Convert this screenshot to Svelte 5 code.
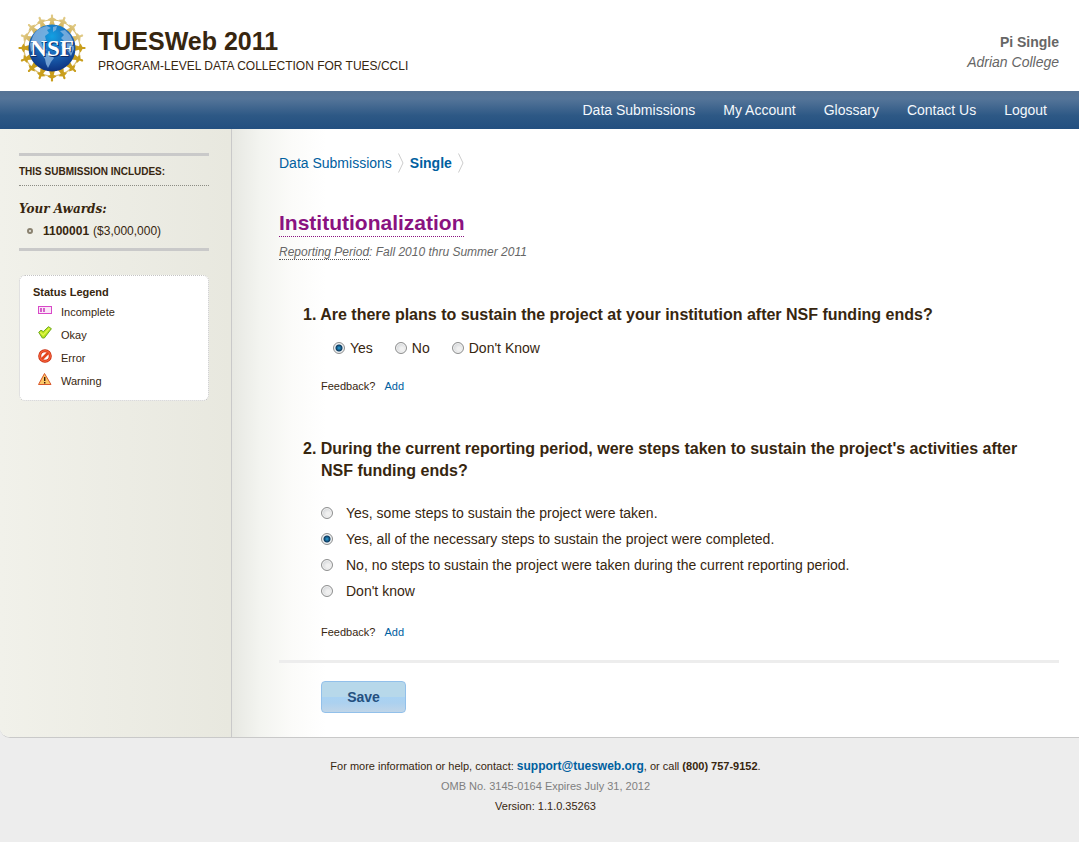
<script lang="ts">
	const navItems = ['Data Submissions', 'My Account', 'Glossary', 'Contact Us', 'Logout'];

	const awards = [{ id: '1100001', amount: '$3,000,000' }];

	const plans = ['Yes', 'No', "Don't Know"];

	const steps = [
		'Yes, some steps to sustain the project were taken.',
		'Yes, all of the necessary steps to sustain the project were completed.',
		'No, no steps to sustain the project were taken during the current reporting period.',
		"Don't know"
	];

	// the figures standing around the globe
	const points = Array.from({ length: 16 }, (_, i) => i * 22.5);

	let plan = $state(plans[0]);
	let step = $state(steps[1]);
</script>

<div class="page">
	<header class="header">
		<svg class="logo" width="68" height="68" viewBox="-34 -34 68 68" aria-hidden="true">
			<defs>
				<linearGradient id="gold-top" x1="0" y1="0" x2="0" y2="1">
					<stop offset="0" stop-color="#e2cd8c" />
					<stop offset="1" stop-color="#d3b45c" />
				</linearGradient>
				<radialGradient id="globe" cx="0.5" cy="0.25" r="0.8">
					<stop offset="0" stop-color="#12a0e2" />
					<stop offset="0.45" stop-color="#1c6cbc" />
					<stop offset="1" stop-color="#0c2a78" />
				</radialGradient>
			</defs>
			<circle r="28" fill="none" stroke="#dcc27a" stroke-width="1.200" />
			{#each points as angle}
				<path
					class="figure"
					class:low={angle > 80 && angle < 280}
					transform="rotate({angle})"
					d="M0 -33.800L1.100 -33L1 -30.500L4.600 -28.600L1.700 -27L3 -22.500H-3L-1.700 -27L-4.600 -28.600L-1 -30.500L-1.100 -33Z"
				/>
			{/each}
			<circle r="23.500" fill="url(#globe)" />
			<g fill="#8fbbe4" opacity="0.75">
				<path d="M-19 -12C-16 -18 -11 -21 -5 -22L-1 -20L-5 -18L-3 -15L-7 -12L-6 -8L-11 -6L-9 -1L-5 2L-8 3L-14 -2L-17 -1L-21 4L-22 -4Z" />
				<path d="M1 -21L5 -22L4 -18L1 -16Z" />
				<path d="M8 -17L13 -18L18 -13L21 -7L22 1L19 8L16 3L12 2L9 -3L12 -7L9 -10L12 -13Z" />
				<path d="M-7 5L-2 6L2 10L-1 14L-4 20L-6 16L-7 11L-9 8Z" />
			</g>
			<text class="logo-text shade" x="1" y="9" text-anchor="middle">NSF</text>
			<text class="logo-text" x="0" y="8" text-anchor="middle">NSF</text>
		</svg>
		<div class="brand">
			<h1>TUESWeb 2011</h1>
			<p>PROGRAM-LEVEL DATA COLLECTION FOR TUES/CCLI</p>
		</div>
		<div class="user">
			<strong>Pi Single</strong>
			<em>Adrian College</em>
		</div>
	</header>

	<nav class="nav">
		{#each navItems as item}
			<a href="#top">{item}</a>
		{/each}
	</nav>

	<div class="main">
		<aside class="sidebar">
			<section class="includes">
				<h2>THIS SUBMISSION INCLUDES:</h2>
				<h3>Your Awards:</h3>
				<ul>
					{#each awards as award}
						<li><strong>{award.id}</strong> ({award.amount})</li>
					{/each}
				</ul>
			</section>

			<section class="legend">
				<h2>Status Legend</h2>
				<ul>
					<li>
						<svg width="14" height="14" viewBox="0 0 14 14">
							<rect x="0.500" y="3.500" width="13" height="7" fill="#fbe6f8" stroke="#d848c8" />
							<path d="M2 5h2v4h-2zM5 5h2v4h-2z" fill="#d560ca" />
						</svg>
						<span>Incomplete</span>
					</li>
					<li>
						<svg width="14" height="14" viewBox="0 0 14 14">
							<path d="M0.700 6.300L3 4.200L5.300 5.600L10.500 0.700L13.400 2.700L6.300 12L4.300 12Z" fill="#b9e51c" stroke="#6fa820" stroke-linejoin="round" />
							<path d="M2.200 6.300L5.200 9L11.500 2.300" fill="none" stroke="#e2f64c" stroke-width="1.300" />
						</svg>
						<span>Okay</span>
					</li>
					<li>
						<svg width="14" height="14" viewBox="0 0 14 14">
							<circle cx="7" cy="7" r="5.300" fill="#fff" stroke="#c8290c" stroke-width="3" />
							<path d="M3.500 10.500L10.500 3.500" stroke="#e4451c" stroke-width="2.600" />
							<circle cx="7" cy="7" r="5.300" fill="none" stroke="#f4623a" stroke-width="1.500" />
						</svg>
						<span>Error</span>
					</li>
					<li>
						<svg width="14" height="14" viewBox="0 0 14 14">
							<path d="M6.500 1.500L13 12.500H0.500Z" fill="#fbc767" stroke="#d9582c" stroke-linejoin="round" />
							<path d="M6 5h1.400v4H6zM6 10h1.400v1.400H6z" fill="#3a1a08" />
						</svg>
						<span>Warning</span>
					</li>
				</ul>
			</section>
		</aside>

		<main class="content">
			<div class="crumbs">
				<a href="#submissions">Data Submissions</a>
				<svg width="6" height="20" viewBox="0 0 6 20"><path d="M0.500 0.500L5 10L0.500 19.500" /></svg>
				<a class="current" href="#single">Single</a>
				<svg width="6" height="20" viewBox="0 0 6 20"><path d="M0.500 0.500L5 10L0.500 19.500" /></svg>
			</div>

			<h2 class="title">Institutionalization</h2>
			<p class="period"><span>Reporting Period</span>: Fall 2010 thru Summer 2011</p>

			<form onsubmit={(e) => e.preventDefault()}>
				<div class="question" role="radiogroup" aria-labelledby="q1">
					<h3 id="q1">1. Are there plans to sustain the project at your institution after NSF funding ends?</h3>
					<div class="inline-options">
						{#each plans as option}
							<label><input type="radio" name="plan" value={option} bind:group={plan} />{option}</label>
						{/each}
					</div>
					<p class="feedback">Feedback? <a href="#feedback-1">Add</a></p>
				</div>

				<div class="question" role="radiogroup" aria-labelledby="q2">
					<h3 id="q2">2. During the current reporting period, were steps taken to sustain the project's activities after NSF funding ends?</h3>
					<div class="options">
						{#each steps as option}
							<label><input type="radio" name="step" value={option} bind:group={step} />{option}</label>
						{/each}
					</div>
					<p class="feedback">Feedback? <a href="#feedback-2">Add</a></p>
				</div>

				<div class="actions">
					<button type="submit">Save</button>
				</div>
			</form>
		</main>
	</div>

	<footer class="footer">
		<p>
			For more information or help, contact: <a href="mailto:support@tuesweb.org">support@tuesweb.org</a>, or call
			<strong>(800) 757-9152</strong>.
		</p>
		<p class="omb">OMB No. 3145-0164 Expires July 31, 2012</p>
		<p>Version: 1.1.0.35263</p>
	</footer>
</div>

<style>
	:global(body) {
		background: #ededed;
	}

	.page {
		font-family: Arial, 'Liberation Sans', sans-serif;
		font-size: 14px;
		line-height: 20px;
		color: #37260f;
	}

	h1, h2, h3, p, ul {
		margin: 0;
		padding: 0;
	}

	ul {
		list-style: none;
	}

	a {
		color: #00609f;
		text-decoration: none;
	}

	a:hover {
		text-decoration: underline;
	}

	.header {
		display: flex;
		align-items: flex-start;
		gap: 12px;
		height: 77px;
		padding: 14px 20px 0 18px;
		background: #fff;
	}

	.logo {
		flex: none;
	}

	.logo-text {
		font-family: 'Liberation Serif', serif;
		font-size: 23px;
		font-weight: bold;
		fill: #fff;
	}

	.logo-text.shade {
		fill: #0b2a66;
	}

	.figure {
		fill: url(#gold-top);
	}

	.figure.low {
		fill: #c99e1c;
	}

	.brand {
		flex: 1;
		padding-top: 12px;
	}

	h1 {
		font-size: 25px;
		line-height: 30px;
	}

	.brand p {
		font-size: 12px;
	}

	.user {
		display: flex;
		flex-direction: column;
		align-items: flex-end;
		padding-top: 18px;
		color: #666;
	}

	.nav {
		display: flex;
		justify-content: flex-end;
		padding: 0 18px;
		background: linear-gradient(#567394, #557599 20%, #2d5885 65%, #234f80);
	}

	.nav a {
		padding: 0 14px;
		line-height: 38px;
		color: #f4f8fc;
	}

	.main {
		display: flex;
		border-bottom: 1px solid #c9c9c9;
		border-bottom-left-radius: 10px;
		background: #fff;
		overflow: hidden;
	}

	.sidebar {
		flex: none;
		width: 190px;
		padding: 24px 22px 24px 19px;
		border-right: 1px solid #c9c9c9;
		background: linear-gradient(to right, #f1f1ea, #e8e8df);
	}

	.includes {
		padding-bottom: 5px;
		border-top: 3px solid #c9c9c9;
		border-bottom: 3px solid #c9c9c9;
	}

	.includes h2 {
		padding: 6px 0 3px;
		border-bottom: 1px dotted #8c8c84;
		font-size: 10px;
	}

	.includes h3 {
		padding-top: 13px;
		font-family: Georgia, 'DejaVu Serif', serif;
		font-size: 12px;
		font-style: italic;
	}

	.includes li {
		display: flex;
		align-items: center;
		gap: 4px;
		padding: 2px 0 2px 8px;
		font-size: 12px;
	}

	.includes li::before {
		content: '';
		width: 2px;
		height: 2px;
		margin-right: 6px;
		border: 2px solid #8a8270;
		border-radius: 50%;
	}

	.legend {
		margin-top: 24px;
		padding: 6px 13px;
		border: 1px dotted #c4c4c4;
		border-radius: 6px;
		background: #fff;
		font-size: 11px;
	}

	.legend h2 {
		font-size: 11px;
	}

	.legend li {
		display: flex;
		gap: 9px;
		padding: 0 0 3px 5px;
	}

	.legend svg {
		flex: none;
		margin-top: 1px;
	}

	.content {
		flex: 1;
		padding: 24px 20px 24px 47px;
		background: linear-gradient(to right, #e7e8e2, #f3f4f0 28px, #fbfbf9 60px, #fff 94px);
	}

	.crumbs {
		display: flex;
		align-items: center;
		gap: 6px;
	}

	.crumbs path {
		fill: none;
		stroke: #ccc;
	}

	.current {
		font-weight: bold;
	}

	.title {
		width: fit-content;
		margin-top: 37px;
		border-bottom: 1px dotted #8a1280;
		font-size: 21px;
		line-height: 26px;
		color: #8a1280;
	}

	.period {
		margin-top: 5px;
		font-size: 12px;
		font-style: italic;
		color: #666;
	}

	.period span {
		border-bottom: 1px dotted #555;
	}

	form {
		margin-top: 42px;
	}

	.question {
		padding: 0 24px 0 42px;
	}

	.question + .question {
		margin-top: 42px;
	}

	.question h3 {
		font-size: 16px;
		line-height: 22px;
		text-indent: -18px;
	}

	.inline-options {
		display: flex;
		gap: 22px;
		margin: 12px 0 0 12px;
	}

	label {
		display: flex;
		align-items: center;
	}

	.inline-options label {
		gap: 5px;
	}

	.options {
		margin-top: 18px;
	}

	.options label {
		gap: 13px;
		line-height: 26px;
	}

	input {
		appearance: none;
		flex: none;
		width: 12px;
		height: 12px;
		margin: 0;
		border: 1px solid #8e8f8f;
		border-radius: 50%;
		background: radial-gradient(circle at 60% 60%, #f0f0f0 20%, #c4c8cc);
		box-shadow: inset 0 0 0 1px #f2f2f2;
	}

	input:checked {
		background: radial-gradient(circle, #2aa0d8 0, #0c3a60 3px, #dfe6ea 4px);
	}

	.feedback {
		margin-top: 18px;
		font-size: 11px;
	}

	.feedback a {
		margin-left: 6px;
	}

	.actions {
		margin-top: 18px;
		padding: 18px 42px 0;
		border-top: 3px solid #ededed;
	}

	button {
		display: block;
		width: 85px;
		height: 32px;
		border: 1px solid #92c0ea;
		border-radius: 4px;
		background: linear-gradient(#b7d8ea 50%, #a9d2f2 50%, #acd1ef 70%, #c0d5e8);
		font: bold 14px Arial, 'Liberation Sans', sans-serif;
		color: #24507f;
		cursor: pointer;
	}

	.footer {
		padding: 18px 0 26px 12px;
		font-size: 11px;
		text-align: center;
	}

	.footer a {
		font-size: 12px;
		font-weight: bold;
	}

	.omb {
		color: #7f7f7f;
	}
</style>
